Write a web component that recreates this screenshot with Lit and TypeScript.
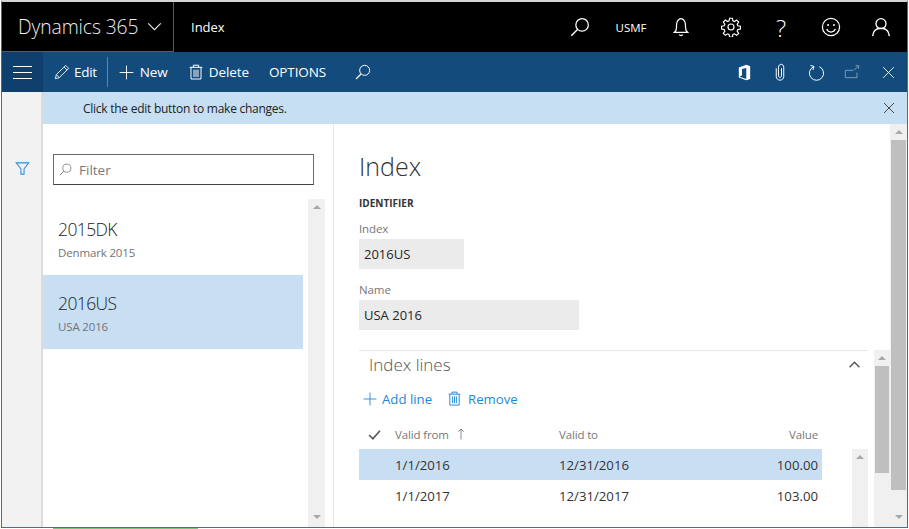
import { LitElement, css, html, svg } from 'lit'
import { customElement } from 'lit/decorators.js'

const icon = (size: number, body: unknown, cls = '') => html`
  <svg class="ic ${cls}" width=${size} height=${size} viewBox="0 0 24 24" fill="none" stroke="currentColor">${body}</svg>
`

const searchIcon = svg`<circle cx="14.5" cy="9.5" r="7.5" stroke-width="1.5"/><path d="M9 15 1.5 22.5" stroke-width="1.8"/>`
const bellIcon = svg`<path d="M4 18.5h16c-1.8-1.6-2.6-3-2.6-6V9.5C17.4 5.5 15 2 12 2S6.600 5.500 6.600 9.500v3c0 3-.8 4.400-2.600 6Z" stroke-width="1.500"/><path d="M10 21a2.200 2.200 0 0 0 4 0" stroke-width="1.500"/>`
const gearIcon = svg`<circle cx="12" cy="12" r="3.600" stroke-width="1.400"/><path d="M10.300 1.500h3.400l.6 3.100 1.800.8 2.700-1.800 2.400 2.400-1.800 2.700.8 1.800 3.100.6v3.400l-3.100.6-.8 1.800 1.800 2.700-2.400 2.400-2.700-1.800-1.800.8-.6 3.100h-3.400l-.6-3.100-1.800-.8-2.700 1.800-2.400-2.400 1.800-2.700-.8-1.800-3.100-.6v-3.400l3.100-.6.8-1.800-1.800-2.700 2.400-2.400 2.700 1.800 1.800-.8Z" stroke-width="1.400"/>`
const smileIcon = svg`<circle cx="12" cy="12" r="10.300" stroke-width="1.500"/><circle cx="8.500" cy="9.500" r="1.200" fill="currentColor" stroke="none"/><circle cx="15.500" cy="9.500" r="1.200" fill="currentColor" stroke="none"/><path d="M6.800 14.500c1 2.300 3 3.500 5.200 3.500s4.200-1.200 5.200-3.500" stroke-width="1.500"/>`
const personIcon = svg`<circle cx="12" cy="8" r="6" stroke-width="1.600"/><path d="M2 23c.5-6 4.500-9.500 10-9.500S21.500 17 22 23" stroke-width="1.600"/>`
const closeIcon = svg`<path d="M2 2 22 22M22 2 2 22" stroke-width="1.600"/>`
const plusIcon = svg`<path d="M12 1v22M1 12h22" stroke-width="1.500"/>`
const trashIcon = svg`<path d="M2.500 5h19M8 5V1.800h8V5M4.500 5v17.500h15V5M9 8.500v11M12 8.500v11M15 8.500v11" stroke-width="1.500"/>`
const pencilIcon = svg`<path d="M2 22l1.500-6L17.500 2l4.500 4.500L8 20.500 2 22ZM15 4.500l4.500 4.500M3.500 16l4.500 4.500" stroke-width="1.300"/>`
const officeIcon = svg`<path d="M14.500 1 4 5v14l10.500 4L20 21V3l-5.500-2Z" fill="currentColor" stroke="none"/><path d="M14.500 5.500 8.500 7v9l-3.500 2 9.500 3Z" fill="#134b7d" stroke="none"/>`
const clipIcon = svg`<path d="M7 7v11c0 6.500 10 6.500 10 0V5.500c0-5-7-5-7 0V17c0 3 4 3 4 0V7" stroke-width="1.300"/>`
const refreshIcon = svg`<path d="M8 3.800A10 10 0 1 0 16 3.800" stroke-width="1.400"/><path d="M3.500 2 8.500 3.500 7 8.500" stroke-width="1.400"/>`
const popoutIcon = svg`<path d="M19.500 13v7.500H2V9.500h12M15 9 22 3M17.500 2.500H22V7" stroke-width="1.500"/>`
const funnelIcon = svg`<path d="M2 3h20l-7.500 9.500V21h-5v-8.500L2 3Z" stroke-width="1.700"/>`
const chevronUp = svg`<path d="M3 17 12 8l9 9" stroke-width="2.600"/>`
const chevronDown = svg`<path d="M2 7l10 10L22 7" stroke-width="1.700"/>`
const checkIcon = svg`<path d="M2 13l7 7L22 5" stroke-width="3"/>`
const arrowUp = svg`<path d="M12 23V2M6.500 7.500 12 2l5.500 5.500" stroke-width="1.700"/>`

@customElement('app-root')
export class AppRoot extends LitElement {
  static styles = css`
    :host {
      display: block;
      width: 909px;
      height: 529px;
      overflow: hidden;
      background: #fff;
      font-family: "Open Sans", "Noto Sans", sans-serif;
      color: #262626;
    }
    .ic { display: block; flex: none; }
    .window {
      width: 907px;
      height: 528px;
      margin-left: 1px;
      box-sizing: border-box;
      border: 1px solid #2e75b6;
      border-top: 2px solid #d4d4d4;
      border-width: 2px 1px 1px 1px;
      display: flex;
      flex-direction: column;
      overflow: hidden;
    }

    .topbar {
      flex: none;
      height: 50px;
      background: #000;
      color: #fff;
      display: flex;
      align-items: center;
      padding-right: 1px;
    }
    .brand {
      width: 172px;
      height: 50px;
      box-sizing: border-box;
      border-right: 1px solid #5a5a5a;
      border-bottom: 1px solid #5a5a5a;
      padding-left: 16px;
      display: flex;
      align-items: center;
      gap: 9px;
      font-size: 19.3px;
      font-weight: 300;
      color: #eee;
      letter-spacing: -.1px;
    }
    .page-name { margin-left: 17px; font-size: 13px; flex: 1; }
    .cell { width: 50px; height: 50px; display: flex; align-items: center; justify-content: center; }
    .cell-search { margin-right: 2px; width: 48px; }
    .company { font-size: 11.5px; font-weight: 400; letter-spacing: -.05px; }
    .help { font-size: 24px; font-weight: 300; }

    .cmdbar {
      flex: none;
      height: 40px;
      background: #134b7d;
      color: #fff;
      display: flex;
      align-items: center;
      font-size: 13.5px;
      letter-spacing: -.1px;
    }
    .burger {
      width: 41px;
      height: 40px;
      background: #0f3f6c;
      display: flex;
      flex-direction: column;
      align-items: center;
      justify-content: center;
      gap: 5px;
    }
    .burger i { display: block; width: 19px; height: 1px; background: #fff; }
    .cmd { display: flex; align-items: center; gap: 4px; }
    .cmd-edit { margin-left: 11px; letter-spacing: -.3px; }
    .sep { width: 1px; height: 30px; background: #5f87aa; margin: 0 11px 0 10px; }
    .cmd-new { gap: 6px; }
    .cmd-delete { margin-left: 20px; gap: 5px; }
    .cmd-options { margin-left: 20px; }
    .cmd-search { margin-left: 29px; }
    .spacer { flex: 1; }
    .cmd-icon { width: 36px; height: 40px; display: flex; align-items: center; justify-content: center; }
    .cmd-icons { display: flex; padding-right: 1px; }
    .dim { color: #7f98b0; }

    .body { flex: 1; min-height: 0; display: flex; }
    .rail {
      flex: none;
      width: 41px;
      box-sizing: border-box;
      background: #f2f2f2;
      border-right: 2px solid #dcdcdc;
      padding: 69px 0 0 13px;
      color: #2f8fe0;
    }
    .main { flex: 1; min-width: 0; display: flex; flex-direction: column; }
    .msgbar {
      flex: none;
      height: 32px;
      background: #c7dff3;
      display: flex;
      align-items: center;
      padding-left: 40px;
      font-size: 12px;
      letter-spacing: -.26px;
      color: #222;
    }
    .msgbar span { flex: 1; }
    .msgbar .cmd-icon { height: 32px; }

    .content { flex: 1; min-height: 0; display: flex; }
    .list-pane {
      flex: none;
      width: 291px;
      box-sizing: border-box;
      border-right: 1px solid #e6e6e6;
      display: flex;
      flex-direction: column;
    }
    .filter {
      flex: none;
      width: 261px;
      height: 31px;
      box-sizing: border-box;
      margin: 30px 0 14px 10px;
      border: 1px solid #6b6b6b;
      border-bottom-color: #444;
      display: flex;
      align-items: center;
      gap: 7px;
      padding-left: 5px;
      font-size: 13.5px;
      color: #7a7a7a;
    }
    .list-row { flex: 1; min-height: 0; display: flex; gap: 5px; }
    .list { width: 260px; padding-top: 2px; }
    .item { height: 74px; box-sizing: border-box; padding: 15px 0 0 15px; }
    .item.selected { background: #c8dff3; }
    .item b { display: block; font-weight: 300; font-size: 17.5px; line-height: 26px; color: #222; letter-spacing: -.6px; }
    .item small { display: block; font-size: 11.5px; line-height: 20px; margin-top: 1px; color: #737373; letter-spacing: -.15px; }

    .scroll {
      flex: none;
      background: #f0f0f0;
      display: flex;
      flex-direction: column;
      align-items: center;
      justify-content: space-between;
      box-sizing: border-box;
    }
    .scroll .up, .scroll .down { width: 0; height: 0; border: 4px solid transparent; flex: none; }
    .scroll .up { border-bottom: 4px solid #a8a8a8; border-top: 0; margin-top: 6px; }
    .scroll .down { border-top: 4px solid #a8a8a8; border-bottom: 0; margin-bottom: 8px; }
    .scroll .thumb { align-self: stretch; background: #bfbfbf; }
    .scroll .fill { flex: 1; }
    .list-scroll { width: 17px; }

    .form-pane { flex: 1; min-width: 0; display: flex; }
    .form { flex: 1; min-width: 0; display: flex; flex-direction: column; }
    .form-head { flex: none; height: 226px; box-sizing: border-box; padding: 22px 0 0 25px; }
    h1 { margin: 0; font-size: 25px; line-height: 40px; font-weight: 300; color: #333; }
    h2 { margin: 10px 0 10px; font-size: 10px; line-height: 14px; font-weight: 700; color: #333; }
    label { display: block; font-size: 11.5px; line-height: 18px; color: #777; letter-spacing: -.1px; }
    .value {
      height: 30px;
      margin: 1px 0 12px;
      padding-left: 5px;
      background: #ebebeb;
      font-size: 13px;
      line-height: 30px;
      box-sizing: border-box;
    }
    .w-index { width: 105px; }
    .w-name { width: 220px; }

    .section-wrap { flex: 1; min-height: 0; display: flex; }
    .section { flex: 1; min-width: 0; margin-left: 25px; margin-right: 6px; border-top: 1px solid #e8e8e8; display: flex; flex-direction: column; }
    .section-head {
      flex: none;
      height: 27px;
      display: flex;
      align-items: center;
      justify-content: space-between;
      padding: 0 7px 0 10px;
      font-size: 17px;
      font-weight: 300;
      color: #555;
    }
    .section-actions {
      flex: none;
      height: 41px;
      display: flex;
      align-items: center;
      padding-left: 4px;
      font-size: 13.2px;
      color: #1f87d8;
      gap: 15px;
    }
    .action { display: flex; align-items: center; gap: 5px; }
    .action.remove { gap: 6px; }
    .grid-head, .row {
      display: grid;
      grid-template-columns: 36px 164px 1fr auto;
      align-items: center;
      box-sizing: border-box;
      padding-right: 4px;
    }
    .grid-head {
      flex: none;
      width: 463px;
      height: 30px;
      font-size: 11.5px;
      color: #777;
      letter-spacing: -.15px;
    }
    .check { padding-left: 9px; color: #555; }
    .from { display: flex; align-items: center; gap: 6px; }
    .grid-body { flex: 1; min-height: 0; display: flex; justify-content: space-between; }
    .rows { width: 463px; }
    .row {
      height: 31px;
      font-size: 13.2px;
      color: #333;
    }
    .row.selected { background: #c8dff3; }
    .grid-scroll { width: 16px; }
    .inner-scroll { width: 16px; }
    .inner-scroll .thumb { height: 107px; margin: 6px 1px 0; flex: none; }
    .page-scroll { width: 17px; }
    .page-scroll .thumb { height: 350px; margin: 6px 1px 0; flex: none; }

    .under { height: 1px; margin-left: 53px; width: 145px; background: #7cc47e; }
  `

  render () {
    return html`
      <div class="window">
        <div class="topbar">
          <div class="brand">
            <span>Dynamics 365</span>
            ${icon(15, chevronDown)}
          </div>
          <div class="page-name">Index</div>
          <div class="cell cell-search">${icon(20, searchIcon)}</div>
          <div class="cell company">USMF</div>
          <div class="cell">${icon(20, bellIcon)}</div>
          <div class="cell">${icon(20, gearIcon)}</div>
          <div class="cell help">?</div>
          <div class="cell">${icon(20, smileIcon)}</div>
          <div class="cell">${icon(20, personIcon)}</div>
        </div>

        <div class="cmdbar">
          <div class="burger"><i></i><i></i><i></i></div>
          <div class="cmd cmd-edit">${icon(16, pencilIcon)}<span>Edit</span></div>
          <div class="sep"></div>
          <div class="cmd cmd-new">${icon(15, plusIcon)}<span>New</span></div>
          <div class="cmd cmd-delete">${icon(16, trashIcon)}<span>Delete</span></div>
          <div class="cmd cmd-options"><span>OPTIONS</span></div>
          <div class="cmd cmd-search">${icon(16, searchIcon)}</div>
          <div class="spacer"></div>
          <div class="cmd-icons">
            <div class="cmd-icon">${icon(17, officeIcon)}</div>
            <div class="cmd-icon">${icon(18, clipIcon)}</div>
            <div class="cmd-icon">${icon(17, refreshIcon)}</div>
            <div class="cmd-icon dim">${icon(16, popoutIcon)}</div>
            <div class="cmd-icon">${icon(13, closeIcon)}</div>
          </div>
        </div>

        <div class="body">
          <div class="rail">${icon(15, funnelIcon)}</div>
          <div class="main">
            <div class="msgbar">
              <span>Click the edit button to make changes.</span>
              <div class="cmd-icon">${icon(12, closeIcon)}</div>
            </div>
            <div class="content">
              <div class="list-pane">
                <div class="filter">${icon(13, searchIcon)}<span>Filter</span></div>
                <div class="list-row">
                  <div class="list">
                    <div class="item"><b>2015DK</b><small>Denmark 2015</small></div>
                    <div class="item selected"><b>2016US</b><small>USA 2016</small></div>
                  </div>
                  <div class="scroll list-scroll"><span class="up"></span><span class="down"></span></div>
                </div>
              </div>

              <div class="form-pane">
                <div class="form">
                  <div class="form-head">
                    <h1>Index</h1>
                    <h2>IDENTIFIER</h2>
                    <label>Index</label>
                    <div class="value w-index">2016US</div>
                    <label>Name</label>
                    <div class="value w-name">USA 2016</div>
                  </div>
                  <div class="section-wrap">
                    <div class="section">
                      <div class="section-head">
                        <span>Index lines</span>
                        ${icon(13, chevronUp)}
                      </div>
                      <div class="section-actions">
                        <div class="action">${icon(14, plusIcon)}<span>Add line</span></div>
                        <div class="action remove">${icon(15, trashIcon)}<span>Remove</span></div>
                      </div>
                      <div class="grid-head">
                        <div class="check">${icon(13, checkIcon)}</div>
                        <div class="from"><span>Valid from</span>${icon(12, arrowUp)}</div>
                        <span>Valid to</span>
                        <span>Value</span>
                      </div>
                      <div class="grid-body">
                        <div class="rows">
                          <div class="row selected"><span></span><span>1/1/2016</span><span>12/31/2016</span><span>100.00</span></div>
                          <div class="row"><span></span><span>1/1/2017</span><span>12/31/2017</span><span>103.00</span></div>
                        </div>
                        <div class="scroll grid-scroll"><span class="up"></span></div>
                      </div>
                    </div>
                    <div class="scroll inner-scroll"><span class="up"></span><span class="thumb"></span><span class="fill"></span></div>
                  </div>
                </div>
                <div class="scroll page-scroll"><span class="up"></span><span class="thumb"></span><span class="fill"></span><span class="down"></span></div>
              </div>
            </div>
          </div>
        </div>
      </div>
      <div class="under"></div>
    `
  }
}
